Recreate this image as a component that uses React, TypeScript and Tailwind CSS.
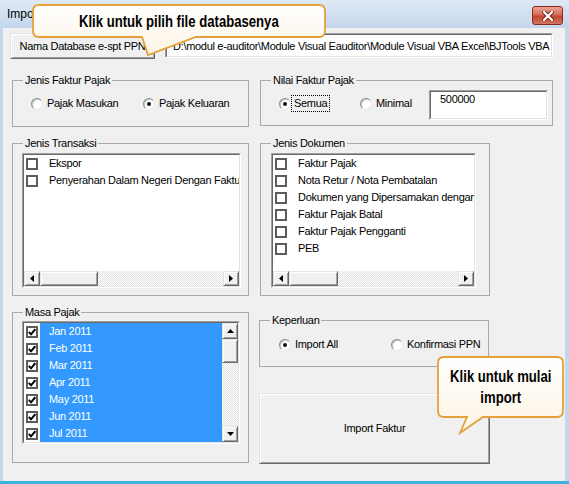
import React from 'react';

const raised =
  'bg-[#f0f0f0] border border-t-[#e3e3e3] border-l-[#e3e3e3] border-r-[#696969] border-b-[#696969] shadow-[inset_1px_1px_0_#ffffff,inset_-1px_-1px_0_#a0a0a0]';
const hatch = 'bg-[repeating-conic-gradient(#e4e4e4_0%_25%,#fbfbfb_0%_50%)] bg-[length:2px_2px]';

type Dir = 'left' | 'right' | 'up' | 'down';

const Arrow = ({ dir }: { dir: Dir }) => {
  const pts = { left: '4,0 0,3.5 4,7', right: '0,0 4,3.5 0,7', up: '0,4 3.5,0 7,4', down: '0,0 7,0 3.5,4' }[dir];
  const horiz = dir === 'left' || dir === 'right';
  return (
    <svg width={horiz ? 4 : 7} height={horiz ? 7 : 4} viewBox={horiz ? '0 0 4 7' : '0 0 7 4'}>
      <polygon points={pts} fill="#000" />
    </svg>
  );
};

const HScroll = ({ thumb }: { thumb: string }) => (
  <div className="flex h-[15px] shrink-0">
    <div className={`${raised} w-[16px] flex items-center justify-center`}>
      <Arrow dir="left" />
    </div>
    <div className={`${hatch} flex-1 flex`}>
      <div className={`${raised} ${thumb}`} />
    </div>
    <div className={`${raised} w-[16px] flex items-center justify-center`}>
      <Arrow dir="right" />
    </div>
  </div>
);

const VScroll = () => (
  <div className="w-[16px] shrink-0 flex flex-col">
    <div className={`${raised} h-[16px] flex items-center justify-center`}>
      <Arrow dir="up" />
    </div>
    <div className={`${hatch} flex-1`}>
      <div className={`${raised} h-[24px]`} />
    </div>
    <div className={`${raised} h-[16px] flex items-center justify-center`}>
      <Arrow dir="down" />
    </div>
  </div>
);

const Sunken = ({ className, children }: { className: string; children: React.ReactNode }) => (
  <div className={`border border-t-[#a0a0a0] border-l-[#a0a0a0] border-r-white border-b-white ${className}`}>
    <div className="h-full flex flex-col overflow-hidden bg-white border border-t-[#696969] border-l-[#696969] border-r-[#e3e3e3] border-b-[#e3e3e3]">
      {children}
    </div>
  </div>
);

const Group = ({
  title,
  className,
  inner,
  children,
}: {
  title: string;
  className: string;
  inner: string;
  children: React.ReactNode;
}) => (
  <fieldset className={`border border-[#a8a8a8] ${className}`}>
    <legend className="ml-[10px] px-[2px] leading-[13px]">{title}</legend>
    <div className={inner}>{children}</div>
  </fieldset>
);

const Radio = ({
  label,
  checked,
  focus,
  className = '',
}: {
  label: string;
  checked?: boolean;
  focus?: boolean;
  className?: string;
}) => (
  <div className={`flex items-center ${focus ? 'gap-0' : 'gap-[4px]'} ${className}`}>
    <span className="w-[12px] h-[12px] shrink-0 rounded-full bg-white border border-t-[#8a8a8a] border-l-[#8a8a8a] border-r-[#e8e8e8] border-b-[#e8e8e8] shadow-[inset_1px_1px_0_#c9c9c9] flex items-center justify-center">
      {checked && <span className="w-[4px] h-[4px] rounded-full bg-[#111]" />}
    </span>
    <span className={focus ? 'border border-dotted border-black px-[2px] py-[1px] leading-[13px]' : 'leading-[13px] whitespace-nowrap'}>
      {label}
    </span>
  </div>
);

const Check = ({ checked }: { checked?: boolean }) => (
  <span className="w-[12px] h-[12px] shrink-0 bg-white border-2 border-[#5c5c5c] flex items-center justify-center">
    {checked && (
      <svg width="8" height="8" viewBox="0 0 8 8">
        <path d="M0.8 3.8 L3 6.3 L7.3 1.2" stroke="#000" strokeWidth="2" fill="none" />
      </svg>
    )}
  </span>
);

const CheckRow = ({ label }: { label: string }) => (
  <div className="flex items-center h-[17px] pl-[2px] whitespace-nowrap">
    <Check />
    <span className="ml-[11px]">{label}</span>
  </div>
);

const transaksi = ['Ekspor', 'Penyerahan Dalam Negeri Dengan Faktur Pajak'];
const dokumen = [
  'Faktur Pajak',
  'Nota Retur / Nota Pembatalan',
  'Dokumen yang Dipersamakan dengan Faktur Pajak',
  'Faktur Pajak Batal',
  'Faktur Pajak Pengganti',
  'PEB',
];
const masa = ['Jan 2011', 'Feb 2011', 'Mar 2011', 'Apr 2011', 'May 2011', 'Jun 2011', 'Jul 2011'];

export default function App() {
  return (
    <div className="relative w-[569px] h-[484px] flex flex-col overflow-hidden bg-[#c4d6ec] text-[11px] tracking-[-0.3px] text-black font-['Liberation_Sans',Arial,sans-serif]">
      {/* title bar */}
      <div className="h-[28px] shrink-0 flex items-start bg-[linear-gradient(to_bottom,#dfe9f5,#c4d6ec)]">
        <span className="pl-[7px] pt-[7px] text-[12px] leading-[15px] tracking-normal">Import Faktur Pajak</span>
        <div className="ml-auto mt-[6px] mr-[6px] w-[31px] h-[19px] rounded-[3px] border border-[#8a2b1d] bg-[linear-gradient(to_bottom,#e9a597_0%,#d56a54_48%,#c2432d_52%,#d27563_100%)] flex items-center justify-center">
          <svg width="12" height="10" viewBox="0 0 12 10">
            <path d="M2 1 L10 9 M10 1 L2 9" stroke="#6e2015" strokeWidth="4" strokeLinecap="square" />
            <path d="M2 1 L10 9 M10 1 L2 9" stroke="#fff" strokeWidth="2.2" strokeLinecap="square" />
          </svg>
        </div>
      </div>

      {/* client area */}
      <div className="flex-1 ml-[3px] mr-[4px] bg-[#f0f0f0] pt-[5px] pl-[7px]">
        <div className="flex items-start gap-[10px]">
          <button className={`${raised} w-[145px] h-[26px] flex items-center justify-center`}>
            Nama Database e-spt PPN
          </button>
          <Sunken className="w-[388px] h-[25px]">
            <div className="pl-[6px] pt-[5px] leading-[13px] whitespace-nowrap">
              {'D:\\modul e-auditor\\Module Visual Eauditor\\Module Visual VBA Excel\\BJTools VBA Excel\\e-spt'}
            </div>
          </Sunken>
        </div>

        <div className="flex gap-[11px] mt-[15px] ml-[2px]">
          <Group title="Jenis Faktur Pajak" className="w-[237px] h-[53px]" inner="flex pl-[18px] pt-[10px]">
            <Radio label="Pajak Masukan" className="w-[112px]" />
            <Radio label="Pajak Keluaran" checked />
          </Group>
          <Group title="Nilai Faktur Pajak" className="w-[293px] h-[52px]" inner="flex items-start pl-[18px] pt-[3px]">
            <Radio label="Semua" checked focus className="w-[81px] mt-[5px]" />
            <Radio label="Minimal" className="w-[69px] mt-[7px]" />
            <Sunken className="w-[119px] h-[30px]">
              <div className="pl-[9px] pt-[1px] leading-[13px]">500000</div>
            </Sunken>
          </Group>
        </div>

        <div className="flex gap-[11px] mt-[10px] ml-[2px]">
          <Group title="Jenis Transaksi" className="w-[237px] h-[159px]" inner="pl-[9px] pt-[3px]">
            <Sunken className="w-[219px] h-[135px]">
              <div className="flex-1 overflow-hidden">
                {transaksi.map((t) => (
                  <CheckRow key={t} label={t} />
                ))}
              </div>
              <HScroll thumb="w-[58px]" />
            </Sunken>
          </Group>
          <Group title="Jenis Dokumen" className="w-[230px] h-[159px]" inner="pl-[10px] pt-[3px]">
            <Sunken className="w-[205px] h-[135px]">
              <div className="flex-1 overflow-hidden">
                {dokumen.map((t) => (
                  <CheckRow key={t} label={t} />
                ))}
              </div>
              <HScroll thumb="w-[49px]" />
            </Sunken>
          </Group>
        </div>

        <div className="flex gap-[11px] mt-[10px] ml-[2px]">
          <Group title="Masa Pajak" className="w-[237px] h-[157px]" inner="pl-[9px] pt-[2px]">
            <Sunken className="w-[218px] h-[123px]">
              <div className="flex flex-1 min-h-0">
                <div className="flex-1 overflow-hidden">
                  {masa.map((m) => (
                    <div key={m} className="flex h-[17px]">
                      <div className="w-[16px] pl-[2px] flex items-center bg-white">
                        <Check checked />
                      </div>
                      <div className="flex-1 flex items-center pl-[9px] bg-[#3399ff] text-white">{m}</div>
                    </div>
                  ))}
                </div>
                <VScroll />
              </div>
            </Sunken>
          </Group>
          <div className="flex flex-col">
            <Group title="Keperluan" className="w-[230px] h-[53px] mt-[8px] -ml-[1px]" inner="flex pl-[19px] pt-[11px]">
              <Radio label="Import All" checked className="w-[112px]" />
              <Radio label="Konfirmasi PPN" />
            </Group>
            <button className={`${raised} w-[231px] h-[71px] mt-[26px] -ml-[1px] flex items-center justify-center`}>
              Import Faktur
            </button>
          </div>
        </div>
      </div>
      <div className="h-[3px] shrink-0 bg-[#3cb4df]" />

      {/* callout: database */}
      <svg className="absolute left-[31px] top-[3px]" width="297" height="55" viewBox="0 0 297 55">
        <defs>
          <linearGradient id="cb1" x1="0" y1="0" x2="0" y2="1">
            <stop offset="0" stopColor="#ffffff" />
            <stop offset="1" stopColor="#fdf4e3" />
          </linearGradient>
        </defs>
        <path
          d="M8 2 H288 Q294 2 294 8 V28 Q294 34 288 34 H165 L117 52 L111 34 H8 Q2 34 2 28 V8 Q2 2 8 2 Z"
          fill="url(#cb1)"
          stroke="#e4a139"
          strokeWidth="1.8"
        />
      </svg>
      <div className="absolute left-[33px] top-[5px] w-[292px] h-[32px] flex items-center justify-center font-bold text-[16px] leading-[21px] tracking-normal">
        <span className="inline-block scale-x-[0.82] whitespace-nowrap">Klik untuk pilih file databasenya</span>
      </div>

      {/* callout: import */}
      <svg className="absolute left-[436px] top-[355px]" width="130" height="80" viewBox="0 0 130 80">
        <defs>
          <linearGradient id="cb2" x1="0" y1="0" x2="0" y2="1">
            <stop offset="0" stopColor="#ffffff" />
            <stop offset="1" stopColor="#fdf4e3" />
          </linearGradient>
        </defs>
        <path
          d="M8 2 H121 Q127 2 127 8 V56 Q127 62 121 62 H47 L24 78 L31 62 H8 Q2 62 2 56 V8 Q2 2 8 2 Z"
          fill="url(#cb2)"
          stroke="#e4a139"
          strokeWidth="1.8"
        />
      </svg>
      <div className="absolute left-[438px] top-[357px] w-[125px] h-[60px] flex items-center justify-center font-bold text-[16px] leading-[21px] tracking-normal">
        <div className="scale-x-[0.82] text-center whitespace-nowrap">
          Klik untuk mulai
          <br />
          import
        </div>
      </div>
    </div>
  );
}
